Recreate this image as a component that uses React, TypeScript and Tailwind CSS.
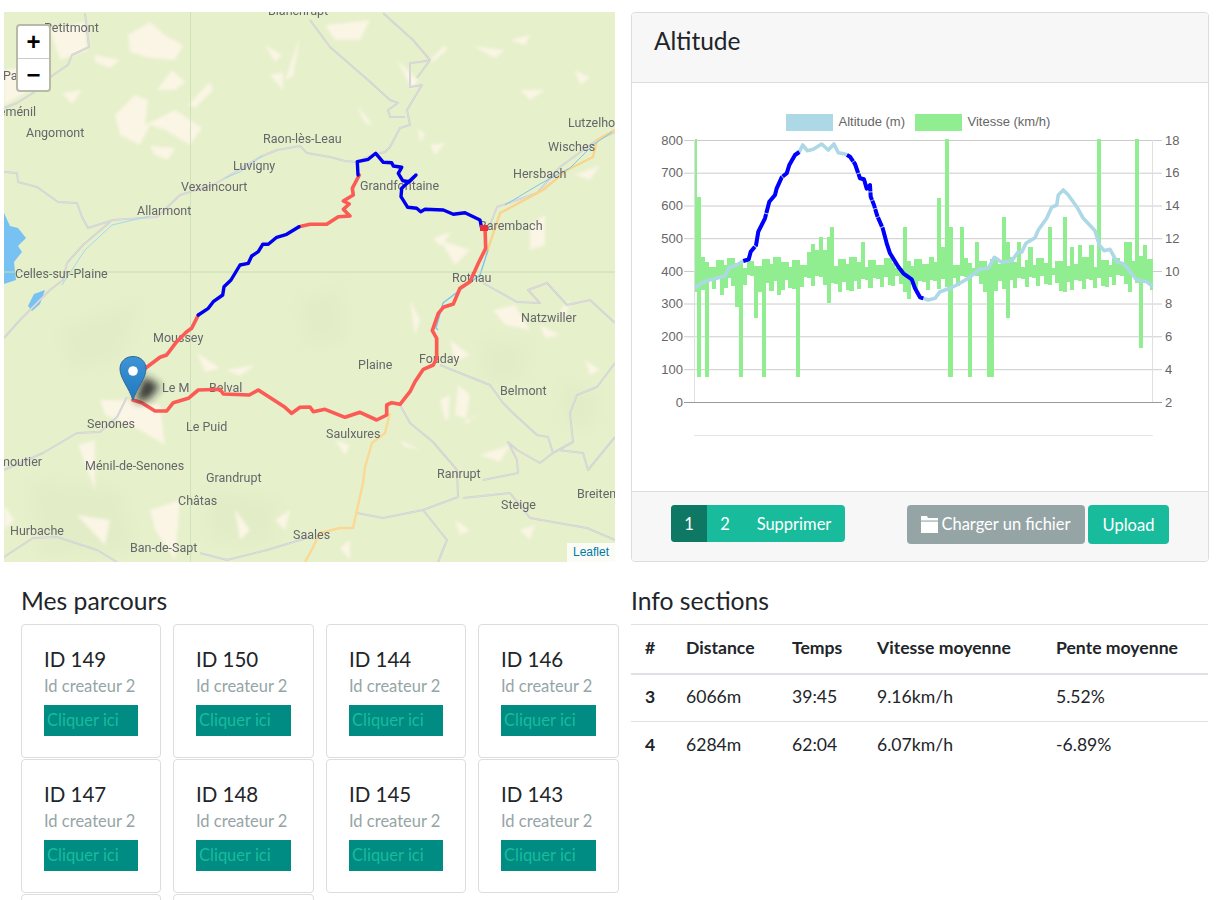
import React from 'react';

const patches = [
  '50,30 85,22 88,50 60,60', '128,35 150,22 165,35 183,45 175,60 150,58 130,52', '95,55 120,60 110,68 95,62',
  '157,90 172,70 185,82 175,90', '188,105 210,82 213,90 195,108', '62,93 82,90 72,104',
  '115,115 135,95 148,100 145,125 175,110 202,128 190,145 165,130 150,125 140,145 120,135',
  '150,146 175,148 168,160 155,155', '285,80 300,36 293,76', '270,75 283,72 283,90', '265,45 282,55 275,62',
  '325,25 370,20 360,40 335,40', '397,60 418,80 412,90', '357,105 373,125 365,123', '473,46 505,50 495,58',
  '430,60 445,45 447,50 433,62', '418,128 425,135 420,142', '430,145 445,143 435,155', '433,238 452,232 440,246',
  '100,400 125,400 160,405 165,445 140,430 105,415', '78,445 95,440 95,490', '77,515 110,520 105,545',
  '150,510 180,500 175,560 155,530', '197,353 220,368 205,372', '226,370 255,365 240,376', '4,70 40,65 30,90 4,105',
  '4,505 14,520 4,530', '493,310 515,305 530,330 505,325', '540,325 560,335 545,338', '450,340 470,355 455,362',
  '458,385 470,395 465,425 485,410 470,420 455,415', '335,440 350,445 345,455', '400,440 420,450 405,447',
  '340,548 350,540 350,560', '480,455 510,445 500,462', '445,420 440,400 450,395 448,420', '585,360 600,370 590,375',
  '530,225 545,215 545,245 530,250', '440,240 470,250 455,265', '520,90 545,90 530,100', '575,70 590,78 580,85',
  '575,175 600,165 590,180', '510,40 530,35 525,45', '410,300 420,320 415,335', '560,310 570,300 565,320',
  '275,520 290,510 285,530', '235,510 250,530 240,540', '520,530 535,525 530,540', '455,520 470,530 460,535',
];

const forest = [
  '30,480 120,490 135,550 40,555', '205,490 280,500 270,545 210,540', '480,340 530,345 520,385 485,380',
  '560,380 600,395 590,430 565,425', '140,300 60,330 70,370 120,360', '300,300 340,290 345,340 305,345',
];

const roads = [
  '85,13 89,47 72,55 68,65 53,75 33,93 17,103 4,108',
  '4,172 17,173 18,182 37,187 58,202 77,203 82,217 88,228 113,220 157,217 180,195 213,185 227,177 260,157 277,150 300,146 307,153 330,157 345,161 357,162 370,156 385,152 390,147 400,128 410,125 407,110 422,85 410,87 410,63 420,62 430,60',
  '310,20 330,47 353,67 368,80 390,100 398,103 388,110 390,117 405,117',
  '383,13 413,40 430,60 417,78',
  '615,132 597,140 560,167 537,193 497,207 488,230',
  '400,405 410,423 433,442 457,470 458,497 423,510 383,518 357,513',
  '463,498 510,493 530,518 587,528 615,540',
  '440,365 490,385 503,403 513,413 537,435 548,437 553,453 540,463 517,450 508,442 517,460 518,473 483,480',
  '553,453 573,442 570,413 577,395 597,387 615,363',
  '483,283 517,302 540,303 528,290 547,283 567,305 590,300 615,323',
  '558,450 583,453 588,470 615,437',
  '423,510 447,540 438,562',
  '127,397 117,417 100,432 77,433 43,453 4,470',
  '4,338 20,320 50,290 63,280 67,263 83,245 110,222',
  '4,557 33,538 57,537 97,550 117,562',
  '200,553 227,560 267,550 310,537',
  '150,365 170,350 197,320',
];

const labels: [string, number, number, ('end' | 'start')?][] = [
  ['Blanchrupt', 268, 15], ['Petitmont', 44, 32], ['Parux', 3, 80], ['Bréménil', 36, 116, 'end'], ['Angomont', 26, 137],
  ['Allarmont', 137, 215], ['Vexaincourt', 181, 191], ['Luvigny', 233, 170], ['Raon-lès-Leau', 263, 143],
  ['Celles-sur-Plaine', 15, 278], ['Grandfontaine', 360, 190], ['Lutzelhouse', 568, 127], ['Wisches', 548, 151],
  ['Hersbach', 513, 178], ['Barembach', 479, 230], ['Rothau', 452, 282], ['Natzwiller', 521, 322], ['Fouday', 419, 363],
  ['Plaine', 358, 369], ['Belmont', 500, 395], ['Saulxures', 326, 438], ['Ranrupt', 437, 478], ['Steige', 501, 509],
  ['Breitenbach', 577, 498], ['Saales', 293, 539], ['Moussey', 153, 342], ['Le M', 162, 392], ['Belval', 209, 392],
  ['Senones', 87, 428], ['Le Puid', 186, 431], ['Moyenmoutier', 42, 466, 'end'], ['Ménil-de-Senones', 85, 470],
  ['Grandrupt', 206, 482], ['Châtas', 178, 505], ['Hurbache', 10, 535], ['Ban-de-Sapt', 130, 552],
];

const redRoute = [
  '133,400 141.7,402.7 155,411 166.7,411 173.3,402.7 188.3,398.3 198.3,390 220,389.3 223.3,394 249.3,395 258.3,390 285,407.3 291.7,413.3 300,407.3 310,407 313.3,411.7 325,409.3 345,417.3 360,412.3 376.7,420 386.7,415 386.7,405 391.7,402.7 400,404.3 410,391.7 415,381.7 423.3,369.3 433.3,365 436.7,358.3 436.7,338.3 432.3,330.7 438.3,313.3 443.3,307.3 453.3,304 460,288.3 470,281.7 478.3,263.3 485.7,248.3 485,226.7',
  '140,372 146.7,367.3 160,357.3 166.7,355 176.7,341.7 186.7,331.7 191.7,328.3 198.3,315',
  '299,226.7 310,224.3 326.7,224.3 338.3,216.7 350,216 343.3,209.3 349.3,204 343.3,201 353.3,195 352.3,188.3 359.3,175',
];

const blueRoute = [
  '198.3,315 208.3,308.3 213.3,301.7 222.7,295 224,286.7 231,280 240,265 248.3,263.3 251.7,256 258.3,251.7 262.7,244.3 268.3,244.3 276.7,237.3 286.7,234.3 299,226.7',
  '358,175 357.3,161.7 368.3,159.3 375.7,153.3 383.3,162.3 391.7,162.7 393.3,166 401.7,167.3 398.3,173.3 402.7,180.7 409.3,181.7 416,175 401.7,188.3 401,196.7 407.7,207.3 416.7,208.3 420.7,211.7 425,209.3 443.3,210 453.3,214.3 465,212.7 480,220 481.7,228.3',
];

const altitudeLine =
  '695,288 701.7,283.3 706.7,280.7 716.7,278.3 725,276 729,267.7 736.7,265 743.3,261 748.7,259.3 750.7,251.7 756,245.3 758.3,231.7 765,218.3 769.3,201.7 775,195 776.7,188.3 781.7,177.3 786.7,173.3 789.3,165 795,155 799.3,152 802.7,145 807.3,150.7 813.3,149.3 821.7,144 828.3,150 834,144 838.3,152.7 845,154 850,156.7 855,164 860,178.3 864,179.3 866.7,188.7 870,185 870.7,196.7 874,205 877.3,216 882.7,228.3 886.7,243.3 890,253.3 898.3,266.7 903.3,273.3 911.7,279.3 915,288.3 920,297.3 923.3,298.3 928.3,300 935,298.3 940,291.7 950,288.3 956.7,285 968.3,278.3 980,269 988.3,268.3 994.3,257.3 1001.7,262.3 1011.7,261 1018.3,251.7 1021.7,252.3 1026,243.3 1035,237.7 1038.3,230 1046.7,218.3 1051.7,207.3 1056.7,205 1058.3,195 1063.3,190 1068.3,195 1076.7,206.7 1083.3,218.3 1095,230.7 1099.3,245 1104,250.7 1110,249.3 1116.7,261.7 1124,264 1136.7,280 1146.7,281.7 1152.7,286.7';

const blueSections = [
  { points: '743.3,261 748.7,259.3 750.7,251.7 756,245.3 758.3,231.7 765,218.3 769.3,201.7 775,195 776.7,188.3 781.7,177.3 786.7,173.3 789.3,165 795,155 799.3,152', dash: '20 1 34 1 40 0.8 200' },
  { points: '847,155 850,156.7 855,164 860,178.3 864,179.3 866.7,188.7 870,185 870.7,196.7 874,205 877.3,216 882.7,228.3 886.7,243.3 890,253.3 898.3,266.7 903.3,273.3 911.7,279.3 915,288.3 920,297.3 923.3,298.3', dash: '9 0.8 12 1 20 0.8 9 1 8 0.8 8 0.8 8 0.8 10 1 200' },
];

// [x, top, bottom]: the bars that leave the 10 km/h band
const spikes: [number, number?, number?][] = [
  [695, 139], [699, 197, 377], [705.5, undefined, 377], [740, undefined, 377], [763, undefined, 377], [799, undefined, 377],
  [756, undefined, 318], [780.5, undefined, 295], [736, undefined, 307], [723, undefined, 295], [828, 237, 303], [909, undefined, 299],
  [950.5, 227, 377], [969.5, undefined, 377], [990, undefined, 377], [994, undefined, 377], [1006, 242, 318], [1140, 256, 348],
  [947, 139], [938.7, 198], [1099, 139], [1137, 139], [1003, 217], [1051, 227], [1065, 217], [961, 227], [903, 227],
  [832, 227], [821.5, 237], [815, 244], [863.5, 242], [976.5, 242], [1020, 242], [1079, 245], [1091.5, 245], [1124, 242], [1128, 242],
  [1146.5, 245], [1071.5, 247], [941.5, 247], [1029, 247], [817, 250], [825, 250], [808, 252],
];

const bars = Array.from({ length: 121 }, (_, i) => {
  const seed = (i * 7919 + 31) % 101;
  const seedB = (i * 4973 + 17) % 97;
  const left = i === 0 ? 694.5 : 697 + (i - 1) * 3.81;
  const width = i === 0 ? 2.5 : Math.min(3.81, 1153 - left);
  let top = 257 + (seed % 12);
  let bottom = 275 + (seedB % 18);
  spikes.forEach(([x, t, b]) => {
    if (x >= left && x < left + 3.81) {
      if (t !== undefined) top = t;
      if (b !== undefined) bottom = b;
    }
  });
  return { left, width, top, bottom };
});

const leftTicks = ['800', '700', '600', '500', '400', '300', '200', '100', '0'];
const rightTicks = ['18', '16', '14', '12', '10', '8', '6', '4', '2'];
const tickY = [140, 172.7, 205.5, 238.2, 271, 303.5, 336.3, 369.2, 402];

const cards = [149, 150, 144, 146, 147, 148, 145, 143, 151, 152];

const sections = [
  { id: 3, distance: '6066m', time: '39:45', speed: '9.16km/h', slope: '5.52%' },
  { id: 4, distance: '6284m', time: '62:04', speed: '6.07km/h', slope: '-6.89%' },
];

const MapPanel = () => (
  <div className="relative w-[611px] h-[550px] overflow-hidden bg-[#e6f0cb]">
    <svg className="block" width="611" height="550" viewBox="4 12 611 550">
      <defs>
        <filter id="soft"><feGaussianBlur stdDeviation="0.4" /></filter>
        <filter id="soft-patch"><feGaussianBlur stdDeviation="1.6" /></filter>
        <filter id="soft-forest"><feGaussianBlur stdDeviation="8" /></filter>
        <filter id="soft-shadow" x="-100%" y="-100%" width="300%" height="300%"><feGaussianBlur stdDeviation="4.5" /></filter>
        <linearGradient id="pin" x1="0" y1="0" x2="0" y2="1">
          <stop offset="0" stopColor="#3f94d6" />
          <stop offset="1" stopColor="#2178bf" />
        </linearGradient>
      </defs>
      <g filter="url(#soft-forest)">
        {forest.map((p) => <polygon key={p} points={p} fill="#e2edc8" />)}
      </g>
      <g filter="url(#soft-patch)">
        {patches.map((p) => <polygon key={p} points={p} fill="#faf5e4" />)}
      </g>
      <g filter="url(#soft)">
        <path d="M4 213 L10 226 L18 228 L26 238 L18 246 L22 252 L14 262 L16 280 L4 284 Z" fill="#78c2f3" />
        <path d="M28 306 L34 294 L45 290 L40 304 L32 311 Z" fill="#78c2f3" />
        {roads.map((d) => (
          <g key={d}>
            <polyline points={d} fill="none" stroke="#cfcfcf" strokeWidth="2" strokeLinejoin="round" />
            <polyline points={d} fill="none" stroke="#e4e4e4" strokeWidth="0.7" strokeLinejoin="round" />
          </g>
        ))}
        <polyline points="615,130 597,140 593,157 567,170 543,190 500,213 490,243 486,255" fill="none" stroke="#f8d58a" strokeWidth="2.4" />
        <polyline points="436,338 436,360" fill="none" stroke="#f4c77c" strokeWidth="2.4" />
        <polyline points="390,413 385,433 372,443 365,467 363,483 353,528 340,528 320,533 310,553 305,562" fill="none" stroke="#fbd893" strokeWidth="2.4" strokeLinejoin="round" />
        <polyline points="612,132 593,145 570,168 540,184 505,205" fill="none" stroke="#7cc4f2" strokeWidth="1" />
        <polyline points="488,250 480,275 443,303 436,328 438,330" fill="none" stroke="#7cc4f2" strokeWidth="1.4" />
        <polyline points="62,285 85,250 112,225 150,216" fill="none" stroke="#a8d6ee" strokeWidth="1" />
        <polyline points="225,178 240,172 262,156" fill="none" stroke="#a8d6ee" strokeWidth="1" />
        <line x1="4" y1="272" x2="615" y2="272" stroke="#c6deb4" strokeWidth="1" />
        <line x1="190.5" y1="12" x2="190.5" y2="562" stroke="#cfe3bb" strokeWidth="1" />
        {labels.map(([text, x, y, anchor]) => (
          <text key={text} x={x} y={y} textAnchor={anchor ?? 'start'} fontFamily="Roboto, sans-serif" fontSize="12.5" fill="#66666a">{text}</text>
        ))}
      </g>
      {redRoute.map((p) => (
        <polyline key={p} points={p} fill="none" stroke="#fb5a55" strokeWidth="3.6" strokeLinejoin="round" strokeLinecap="round" />
      ))}
      {blueRoute.map((p) => (
        <polyline key={p} points={p} fill="none" stroke="#0000ee" strokeWidth="3.4" strokeLinejoin="round" strokeLinecap="round" />
      ))}
      <rect x="480" y="225" width="8" height="6" fill="#e8303a" />
      <polygon points="135,402 144,376 160,386 148,400" fill="#222" opacity="0.9" filter="url(#soft-shadow)" />
      <path d="M133 400 C129 388 120 378 120 369 C120 361 126 356.5 133 356.5 C140 356.5 146 361 146 369 C146 378 137 388 133 400 Z" fill="url(#pin)" stroke="#2e6c97" strokeWidth="1" />
      <circle cx="133" cy="371" r="4.8" fill="#ffffff" />
    </svg>
    <div className="absolute left-3 top-3 w-[35px] h-[68px] rounded border-2 border-[#b9b9a7] bg-white flex flex-col overflow-hidden">
      <div className="h-[33px] border-b border-[#cccccc] flex items-center justify-center text-[24px] font-bold leading-none text-black font-['Liberation_Sans',sans-serif]">+</div>
      <div className="flex-1 flex items-center justify-center text-[24px] font-bold leading-none text-black font-['Liberation_Sans',sans-serif]">−</div>
    </div>
    <div className="absolute right-0 bottom-0 w-[48px] h-[19px] bg-white/80 text-[12px] leading-[19px] text-center text-[#0078a8] font-['Liberation_Sans',sans-serif]">Leaflet</div>
  </div>
);

const AltitudeChart = () => (
  <svg className="block" width="576" height="408" viewBox="632 83 576 408" fontFamily="'Liberation Sans', sans-serif" fontSize="13" fill="#666666">
    <rect x="786" y="114" width="47" height="17" fill="#add8e6" />
    <text x="838.5" y="126">Altitude (m)</text>
    <rect x="915" y="114" width="47" height="17" fill="#90ee90" />
    <text x="967.5" y="126">Vitesse (km/h)</text>

    {tickY.map((y, i) => (
      <g key={y}>
        <line x1="684" x2="1162" y1={y + 0.5} y2={y + 0.5} stroke={i === 8 ? '#999999' : '#cccccc'} />
        <text x="683" y={y + 4.5} textAnchor="end">{leftTicks[i]}</text>
        <text x="1165" y={y + 4.5}>{rightTicks[i]}</text>
      </g>
    ))}
    <line x1="694.5" x2="694.5" y1="140" y2="402" stroke="#e0e0e0" />
    <line x1="1152.5" x2="1152.5" y1="140" y2="402" stroke="#e0e0e0" />
    <line x1="694" x2="1153" y1="435.5" y2="435.5" stroke="#e5e5e5" />

    {bars.map((b) => (
      <rect key={b.left} x={b.left} y={b.top} width={b.width + 0.3} height={b.bottom - b.top} fill="#90ee90" shapeRendering="crispEdges" />
    ))}
    <polyline points={altitudeLine} fill="none" stroke="#add8e6" strokeWidth="3.6" strokeLinejoin="round" />
    {blueSections.map((s) => (
      <polyline key={s.points} points={s.points} fill="none" stroke="#0000ff" strokeWidth="4" strokeLinejoin="round" strokeDasharray={s.dash} />
    ))}
  </svg>
);

const FolderIcon = () => (
  <svg width="17" height="17" viewBox="0 0 17 17" fill="#ffffff">
    <path d="M0 0 H6 L7 2 H17 V4.4 H0 Z" />
    <path d="M0 5.6 H17 V17 H0 Z" />
  </svg>
);

const RouteCard = ({ id }: { id: number }) => (
  <div className="h-[134px] rounded border border-[#dddddd] px-[22px] pt-5">
    <h4 className="text-[20.5px] leading-[28px] text-[#212529]">ID {id}</h4>
    <p className="text-[#95a5a6] text-[16.5px] leading-[24px] mt-[1px]">Id createur 2</p>
    <a className="block mt-[7px] h-[31px] bg-[#008b83] pl-[3px] text-[#18bc9c] text-[16.5px] leading-[30px]">Cliquer ici</a>
  </div>
);

export default function App() {
  return (
    <div className="h-[900px] overflow-hidden bg-white pt-3 pl-1 font-['Lato',sans-serif] text-[#212529]">
      <div className="flex gap-4">
        <MapPanel />
        <div className="w-[578px] h-[550px] rounded border border-[#dddddd] flex flex-col overflow-hidden">
          <div className="h-[70px] shrink-0 bg-[#f7f7f7] border-b border-[#dddddd] pl-[22px] pt-[12px] text-[24.5px] leading-[32px]">Altitude</div>
          <div className="flex-1 bg-white">
            <AltitudeChart />
          </div>
          <div className="h-[71px] shrink-0 bg-[#f7f7f7] border-t border-[#dddddd] flex items-start pt-[13px] pl-[39px] text-white text-[16.5px]">
            <div className="flex h-[37px] rounded overflow-hidden bg-[#18bc9c] leading-[39px]">
              <span className="w-9 text-center bg-[#0f7864]">1</span>
              <span className="w-9 text-center">2</span>
              <span className="w-[102px] text-center">Supprimer</span>
            </div>
            <div className="ml-[62px] flex gap-[3px] h-[39px] leading-[41px]">
              <span className="w-[178px] rounded bg-[#95a5a6] flex items-center justify-center gap-[3px]"><FolderIcon />Charger un fichier</span>
              <span className="w-[81px] rounded bg-[#18bc9c] text-center">Upload</span>
            </div>
          </div>
        </div>
      </div>

      <div className="flex mt-[21px] pl-[17px] gap-3">
        <div className="w-[598px]">
          <h2 className="text-[24.7px] leading-[36px]">Mes parcours</h2>
          <div className="mt-[5px] grid grid-cols-[140px_141px_140px_141px] gap-x-3 gap-y-px">
            {cards.map((id) => <RouteCard key={id} id={id} />)}
          </div>
        </div>
        <div className="w-[577px]">
          <h2 className="text-[24.7px] leading-[36px]">Info sections</h2>
          <table className="mt-[5px] w-full text-[17.6px] border-t border-[#dee2e6] table-fixed">
            <thead>
              <tr className="h-[49px] border-b-2 border-[#dee2e6] font-bold text-left">
                <th className="w-[55px] pl-[14px] pb-[2px]">#</th>
                <th className="w-[106px] pb-[2px]">Distance</th>
                <th className="w-[85px] pb-[2px]">Temps</th>
                <th className="w-[179px] pb-[2px]">Vitesse moyenne</th>
                <th className="pb-[2px]">Pente moyenne</th>
              </tr>
            </thead>
            <tbody>
              {sections.map((s, i) => (
                <tr key={s.id} className={i === 0 ? 'h-[48px] border-b border-[#dee2e6]' : 'h-[48px]'}>
                  <td className="pl-[14px] pb-[2px] font-bold">{s.id}</td>
                  <td className="pb-[2px]">{s.distance}</td>
                  <td className="pb-[2px]">{s.time}</td>
                  <td className="pb-[2px]">{s.speed}</td>
                  <td className="pb-[2px]">{s.slope}</td>
                </tr>
              ))}
            </tbody>
          </table>
        </div>
      </div>
    </div>
  );
}
